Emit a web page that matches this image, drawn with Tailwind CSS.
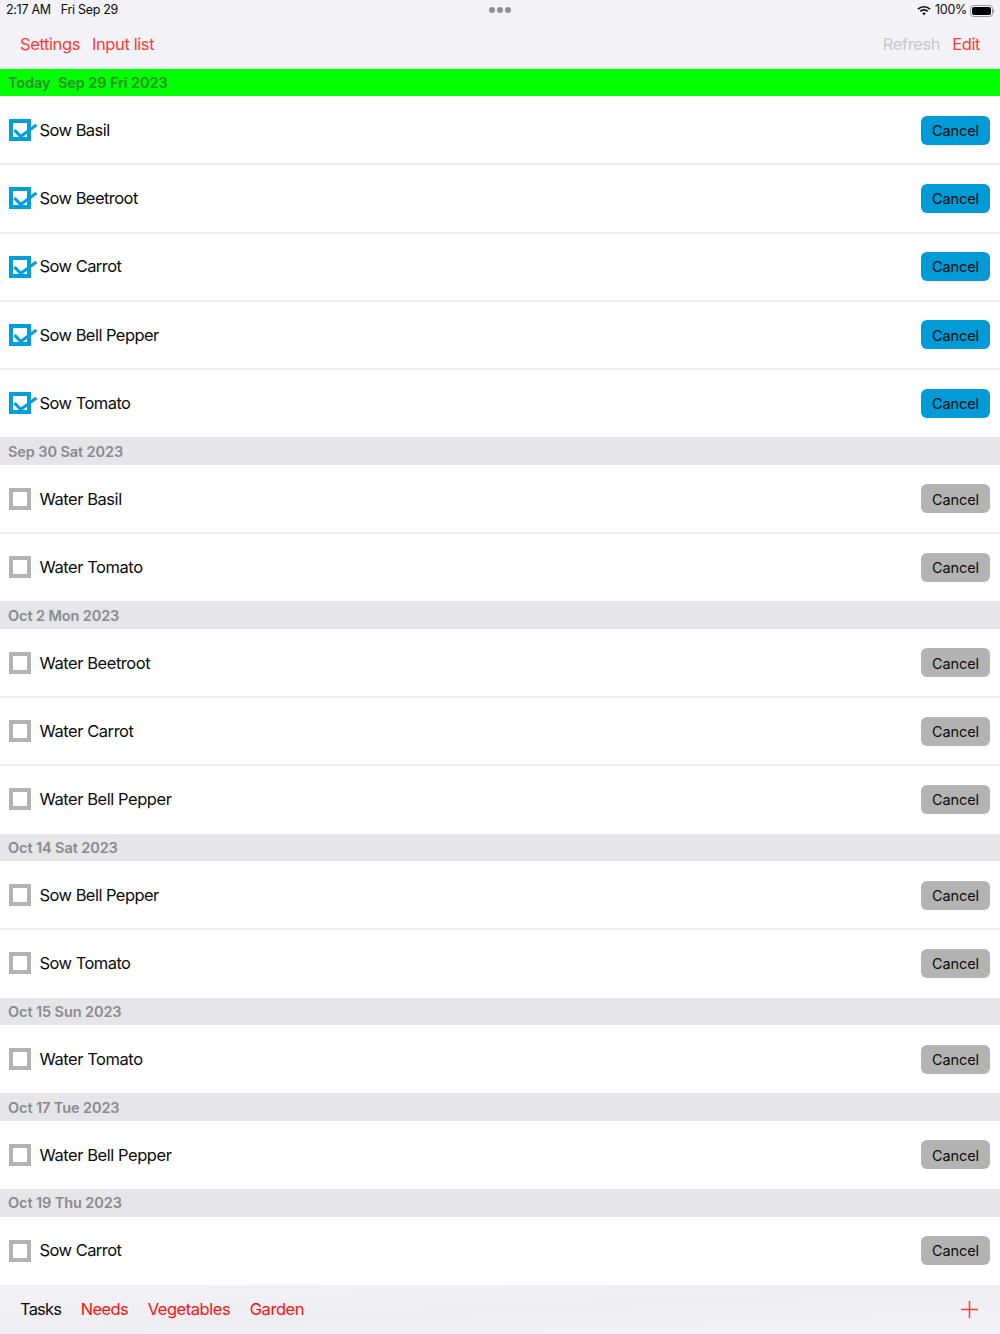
<!DOCTYPE html>
<html lang="en"><head><meta charset="utf-8"><title>Tasks</title>
<script src="https://cdn.jsdelivr.net/npm/@tailwindcss/browser@4"></script></head>
<body class="bg-white font-['Inter','Liberation_Sans',sans-serif] text-[#0c0c0c] overflow-hidden">
<div class="w-[1000px] h-[1334px] flex flex-col overflow-hidden">

<header class="h-[68.5px] bg-[#f2f2f7] border-b border-[#e2e2e6] flex flex-col shrink-0">
  <div class="relative h-[20px] pl-[6px] pr-[6px] pt-[1px] flex items-center justify-between text-[12.5px] tracking-[-0.3px] leading-none">
    <div class="flex gap-[10px]"><span>2:17 AM</span><span>Fri Sep 29</span></div>
    <div class="absolute left-[489px] top-[7px] flex gap-[2px]"><span class="size-[6px] rounded-full bg-[#8e8e93]"></span><span class="size-[6px] rounded-full bg-[#8e8e93]"></span><span class="size-[6px] rounded-full bg-[#8e8e93]"></span></div>
    <div class="flex items-center">
      <svg class="mr-[4px]" width="14" height="11" viewBox="0 0 14 11"><path d="M1 4.2a8.6 8.6 0 0 1 12 0" fill="none" stroke="#111" stroke-width="1.7"/><path d="M3.3 6.4a5.3 5.3 0 0 1 7.4 0" fill="none" stroke="#111" stroke-width="1.7"/><path d="M5.2 8.3 7 10.4l1.8-2.1a2.6 2.6 0 0 0-3.6 0z" fill="#111"/></svg>
      <span class="mr-[3px]">100%</span>
      <div class="flex items-center"><div class="w-[22.5px] h-[12px] rounded-[3.5px] border border-[#9a9a9e] p-[1px]"><div class="w-full h-full bg-black rounded-[2px]"></div></div><div class="w-[1.5px] h-[4px] bg-[#9a9a9e] rounded-r-sm"></div></div>
    </div>
  </div>
  <nav class="flex-1 pl-[20px] pr-[20px] pt-[1px] flex items-center justify-between text-[16.5px] tracking-[-0.4px] text-[#ff3b30]">
    <div class="flex gap-[12px]"><span>Settings</span><span>Input list</span></div>
    <div class="flex gap-[12px]"><span class="text-[#c7c7cc]">Refresh</span><span>Edit</span></div>
  </nav>
</header>

<main class="flex-1 min-h-0">
  <div class="h-[27.5px] bg-[#00ff00] px-[8px] pt-[1px] flex items-center text-[14.5px] font-semibold tracking-[-0.1px] text-[#2a8f2a] gap-[7.5px]"><span>Today</span><span>Sep 29 Fri 2023</span></div>

  <div class="h-[68.25px] shadow-[inset_0_-1px_0_#efeff1,0_1px_0_#efeff1] flex items-center justify-between pl-[9px] pr-[10px]"><div class="flex items-center"><svg class="mr-[2.5px]" width="28" height="22" viewBox="0 0 28 22"><rect x="2" y="2" width="18" height="18" fill="none" stroke="#009fdb" stroke-width="4"/><path d="M5.5 11 11.7 17.5 27.5 6" fill="none" stroke="#009fdb" stroke-width="3.2"/></svg><span class="text-[16.5px] tracking-[-0.55px]">Sow Basil</span></div><button class="w-[69px] h-[29px] pt-[1px] rounded-[6px] bg-[#009ad6] text-[14.5px] tracking-[-0.1px]">Cancel</button></div>
  <div class="h-[68.25px] shadow-[inset_0_-1px_0_#efeff1,0_1px_0_#efeff1] flex items-center justify-between pl-[9px] pr-[10px]"><div class="flex items-center"><svg class="mr-[2.5px]" width="28" height="22" viewBox="0 0 28 22"><rect x="2" y="2" width="18" height="18" fill="none" stroke="#009fdb" stroke-width="4"/><path d="M5.5 11 11.7 17.5 27.5 6" fill="none" stroke="#009fdb" stroke-width="3.2"/></svg><span class="text-[16.5px] tracking-[-0.55px]">Sow Beetroot</span></div><button class="w-[69px] h-[29px] pt-[1px] rounded-[6px] bg-[#009ad6] text-[14.5px] tracking-[-0.1px]">Cancel</button></div>
  <div class="h-[68.25px] shadow-[inset_0_-1px_0_#efeff1,0_1px_0_#efeff1] flex items-center justify-between pl-[9px] pr-[10px]"><div class="flex items-center"><svg class="mr-[2.5px]" width="28" height="22" viewBox="0 0 28 22"><rect x="2" y="2" width="18" height="18" fill="none" stroke="#009fdb" stroke-width="4"/><path d="M5.5 11 11.7 17.5 27.5 6" fill="none" stroke="#009fdb" stroke-width="3.2"/></svg><span class="text-[16.5px] tracking-[-0.55px]">Sow Carrot</span></div><button class="w-[69px] h-[29px] pt-[1px] rounded-[6px] bg-[#009ad6] text-[14.5px] tracking-[-0.1px]">Cancel</button></div>
  <div class="h-[68.25px] shadow-[inset_0_-1px_0_#efeff1,0_1px_0_#efeff1] flex items-center justify-between pl-[9px] pr-[10px]"><div class="flex items-center"><svg class="mr-[2.5px]" width="28" height="22" viewBox="0 0 28 22"><rect x="2" y="2" width="18" height="18" fill="none" stroke="#009fdb" stroke-width="4"/><path d="M5.5 11 11.7 17.5 27.5 6" fill="none" stroke="#009fdb" stroke-width="3.2"/></svg><span class="text-[16.5px] tracking-[-0.55px]">Sow Bell Pepper</span></div><button class="w-[69px] h-[29px] pt-[1px] rounded-[6px] bg-[#009ad6] text-[14.5px] tracking-[-0.1px]">Cancel</button></div>
  <div class="h-[68.25px] flex items-center justify-between pl-[9px] pr-[10px]"><div class="flex items-center"><svg class="mr-[2.5px]" width="28" height="22" viewBox="0 0 28 22"><rect x="2" y="2" width="18" height="18" fill="none" stroke="#009fdb" stroke-width="4"/><path d="M5.5 11 11.7 17.5 27.5 6" fill="none" stroke="#009fdb" stroke-width="3.2"/></svg><span class="text-[16.5px] tracking-[-0.55px]">Sow Tomato</span></div><button class="w-[69px] h-[29px] pt-[1px] rounded-[6px] bg-[#009ad6] text-[14.5px] tracking-[-0.1px]">Cancel</button></div>

  <div class="h-[27.5px] bg-[#e5e5ea] px-[8px] pt-[1px] flex items-center text-[14.5px] font-semibold tracking-[-0.1px] text-[#8a8a8e]">Sep 30 Sat 2023</div>
  <div class="h-[68.25px] shadow-[inset_0_-1px_0_#efeff1,0_1px_0_#efeff1] flex items-center justify-between pl-[9px] pr-[10px]"><div class="flex items-center"><span class="size-[22px] border-4 border-[#b3b3b3] mr-[8.5px]"></span><span class="text-[16.5px] tracking-[-0.45px]">Water Basil</span></div><button class="w-[69px] h-[29px] pt-[1px] rounded-[6px] bg-[#b3b3b3] text-[14.5px] tracking-[-0.1px]">Cancel</button></div>
  <div class="h-[68.25px] flex items-center justify-between pl-[9px] pr-[10px]"><div class="flex items-center"><span class="size-[22px] border-4 border-[#b3b3b3] mr-[8.5px]"></span><span class="text-[16.5px] tracking-[-0.45px]">Water Tomato</span></div><button class="w-[69px] h-[29px] pt-[1px] rounded-[6px] bg-[#b3b3b3] text-[14.5px] tracking-[-0.1px]">Cancel</button></div>

  <div class="h-[27.5px] bg-[#e5e5ea] px-[8px] pt-[1px] flex items-center text-[14.5px] font-semibold tracking-[-0.1px] text-[#8a8a8e]">Oct 2 Mon 2023</div>
  <div class="h-[68.25px] shadow-[inset_0_-1px_0_#efeff1,0_1px_0_#efeff1] flex items-center justify-between pl-[9px] pr-[10px]"><div class="flex items-center"><span class="size-[22px] border-4 border-[#b3b3b3] mr-[8.5px]"></span><span class="text-[16.5px] tracking-[-0.45px]">Water Beetroot</span></div><button class="w-[69px] h-[29px] pt-[1px] rounded-[6px] bg-[#b3b3b3] text-[14.5px] tracking-[-0.1px]">Cancel</button></div>
  <div class="h-[68.25px] shadow-[inset_0_-1px_0_#efeff1,0_1px_0_#efeff1] flex items-center justify-between pl-[9px] pr-[10px]"><div class="flex items-center"><span class="size-[22px] border-4 border-[#b3b3b3] mr-[8.5px]"></span><span class="text-[16.5px] tracking-[-0.45px]">Water Carrot</span></div><button class="w-[69px] h-[29px] pt-[1px] rounded-[6px] bg-[#b3b3b3] text-[14.5px] tracking-[-0.1px]">Cancel</button></div>
  <div class="h-[68.25px] flex items-center justify-between pl-[9px] pr-[10px]"><div class="flex items-center"><span class="size-[22px] border-4 border-[#b3b3b3] mr-[8.5px]"></span><span class="text-[16.5px] tracking-[-0.45px]">Water Bell Pepper</span></div><button class="w-[69px] h-[29px] pt-[1px] rounded-[6px] bg-[#b3b3b3] text-[14.5px] tracking-[-0.1px]">Cancel</button></div>

  <div class="h-[27.5px] bg-[#e5e5ea] px-[8px] pt-[1px] flex items-center text-[14.5px] font-semibold tracking-[-0.1px] text-[#8a8a8e]">Oct 14 Sat 2023</div>
  <div class="h-[68.25px] shadow-[inset_0_-1px_0_#efeff1,0_1px_0_#efeff1] flex items-center justify-between pl-[9px] pr-[10px]"><div class="flex items-center"><span class="size-[22px] border-4 border-[#b3b3b3] mr-[8.5px]"></span><span class="text-[16.5px] tracking-[-0.55px]">Sow Bell Pepper</span></div><button class="w-[69px] h-[29px] pt-[1px] rounded-[6px] bg-[#b3b3b3] text-[14.5px] tracking-[-0.1px]">Cancel</button></div>
  <div class="h-[68.25px] flex items-center justify-between pl-[9px] pr-[10px]"><div class="flex items-center"><span class="size-[22px] border-4 border-[#b3b3b3] mr-[8.5px]"></span><span class="text-[16.5px] tracking-[-0.55px]">Sow Tomato</span></div><button class="w-[69px] h-[29px] pt-[1px] rounded-[6px] bg-[#b3b3b3] text-[14.5px] tracking-[-0.1px]">Cancel</button></div>

  <div class="h-[27.5px] bg-[#e5e5ea] px-[8px] pt-[1px] flex items-center text-[14.5px] font-semibold tracking-[-0.1px] text-[#8a8a8e]">Oct 15 Sun 2023</div>
  <div class="h-[68.25px] flex items-center justify-between pl-[9px] pr-[10px]"><div class="flex items-center"><span class="size-[22px] border-4 border-[#b3b3b3] mr-[8.5px]"></span><span class="text-[16.5px] tracking-[-0.45px]">Water Tomato</span></div><button class="w-[69px] h-[29px] pt-[1px] rounded-[6px] bg-[#b3b3b3] text-[14.5px] tracking-[-0.1px]">Cancel</button></div>

  <div class="h-[27.5px] bg-[#e5e5ea] px-[8px] pt-[1px] flex items-center text-[14.5px] font-semibold tracking-[-0.1px] text-[#8a8a8e]">Oct 17 Tue 2023</div>
  <div class="h-[68.25px] flex items-center justify-between pl-[9px] pr-[10px]"><div class="flex items-center"><span class="size-[22px] border-4 border-[#b3b3b3] mr-[8.5px]"></span><span class="text-[16.5px] tracking-[-0.45px]">Water Bell Pepper</span></div><button class="w-[69px] h-[29px] pt-[1px] rounded-[6px] bg-[#b3b3b3] text-[14.5px] tracking-[-0.1px]">Cancel</button></div>

  <div class="h-[27.5px] bg-[#e5e5ea] px-[8px] pt-[1px] flex items-center text-[14.5px] font-semibold tracking-[-0.1px] text-[#8a8a8e]">Oct 19 Thu 2023</div>
  <div class="h-[68.25px] flex items-center justify-between pl-[9px] pr-[10px]"><div class="flex items-center"><span class="size-[22px] border-4 border-[#b3b3b3] mr-[8.5px]"></span><span class="text-[16.5px] tracking-[-0.55px]">Sow Carrot</span></div><button class="w-[69px] h-[29px] pt-[1px] rounded-[6px] bg-[#b3b3b3] text-[14.5px] tracking-[-0.1px]">Cancel</button></div>
</main>

<footer class="h-[49px] shrink-0 bg-gradient-to-br from-[#f2f2f7] via-[#eeeef2] to-[#f2f2f7] pl-[20px] pr-[22px] flex items-center justify-between text-[16.5px] tracking-[-0.45px] text-[#ff0f0f]">
  <div class="flex gap-[19.5px]"><span class="text-[#0c0c0c] tracking-[-0.8px]">Tasks</span><span class="tracking-[-0.6px]">Needs</span><span>Vegetables</span><span>Garden</span></div>
  <svg width="17" height="17" viewBox="0 0 17 17"><path d="M8.5 0v17M0 8.5h17" stroke="#ff3b30" stroke-width="1.5"/></svg>
</footer>
</div>
</body></html>
